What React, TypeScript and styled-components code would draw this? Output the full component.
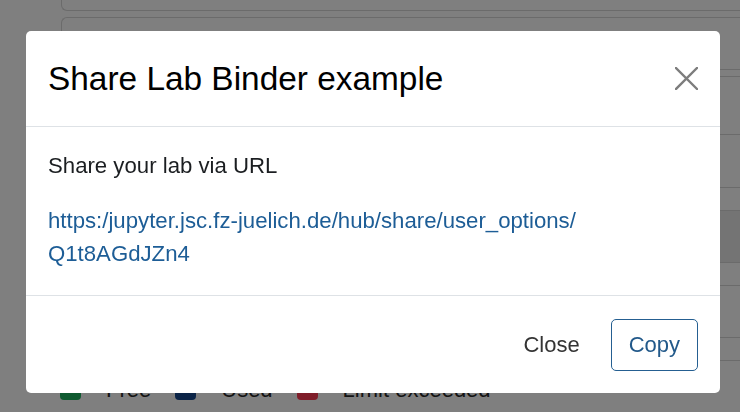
import React from "react";
import styled, { createGlobalStyle } from "styled-components";

const GlobalStyle = createGlobalStyle`
  html, body {
    margin: 0;
    padding: 0;
    background: #7f7f7f;
    font-family: "Liberation Sans", Arial, sans-serif;
    overflow: hidden;
  }
  * { box-sizing: border-box; }
`;

const Page = styled.div`
  width: 740px;
  height: 412px;
  padding-left: 61px;
  display: flex;
  flex-direction: column;
`;

const TopCard = styled.div`
  height: 11px;
  border: 1px solid #6b6b6b;
  border-top: none;
  border-right: none;
  border-radius: 0 0 0 6px;
`;

const Card = styled.div`
  margin-top: 6px;
  border: 1px solid #6b6b6b;
  border-right: none;
  border-radius: 6px 0 0 6px;
  display: flex;
  flex-direction: column;
  padding-bottom: 22px;
`;

const Row = styled.div<{ $h: number; $shade?: boolean }>`
  height: ${(p) => p.$h + 1}px;
  border-bottom: 1px solid #6b6b6b;
  background: ${(p) => (p.$shade ? "#747474" : "transparent")};
`;

const Legend = styled.div`
  margin-top: 12px;
  margin-left: -1px;
  display: flex;
  align-items: center;
  font-size: 22px;
  line-height: 33px;
  color: #141414;
`;

const Swatch = styled.span<{ $c: string }>`
  width: 21px;
  height: 21px;
  border-radius: 4px;
  background: ${(p) => p.$c};
  margin-right: 25px;
`;

const LegendLabel = styled.span`
  margin-right: 24px;
`;

const Dialog = styled.div`
  position: fixed;
  top: 31px;
  left: 26px;
  width: 694px;
  height: 362px;
  background: #fff;
  border-radius: 5px;
  display: flex;
  flex-direction: column;
  color: #1b1e21;
`;

const Header = styled.div`
  height: 96px;
  padding: 0 22px;
  border-bottom: 1px solid #dee2e6;
  display: flex;
  align-items: center;
  justify-content: space-between;
`;

const Title = styled.h4`
  margin: 0;
  font-size: 33.4px;
  line-height: 49px;
  font-weight: 400;
  color: #000;
`;

const CloseX = styled.button`
  width: 23px;
  height: 23px;
  padding: 0;
  border: none;
  background: transparent;
  display: flex;
  cursor: pointer;
  color: #7d7d7d;
`;

const Body = styled.div`
  padding: 22px 22px 25px;
  border-bottom: 1px solid #dee2e6;
  font-size: 22.2px;
  line-height: 33px;
`;

const Para = styled.p`
  margin: 0 0 22px;
  &:last-child { margin-bottom: 0; }
`;

const Link = styled.a`
  color: #1d5d96;
  text-decoration: none;
`;

const Footer = styled.div`
  flex: 1;
  padding: 0 22px 0 22px;
  display: flex;
  align-items: center;
  justify-content: flex-end;
  gap: 13px;
`;

const Button = styled.button<{ $outline?: boolean }>`
  font-family: inherit;
  font-size: 22px;
  line-height: 33px;
  padding: 8.5px 17px;
  border-radius: 5px;
  background: #fff;
  cursor: pointer;
  border: 1px solid ${(p) => (p.$outline ? "#255f91" : "transparent")};
  color: ${(p) => (p.$outline ? "#22598a" : "#343434")};
`;

const rows = [
  { h: 51 },
  { h: 6 },
  { h: 57 },
  { h: 52 },
  { h: 22 },
  { h: 51, shade: true },
  { h: 22 },
  { h: 51 },
];

const legend = [
  { c: "#0f5a30", label: "Free" },
  { c: "#0b2447", label: "Used" },
  { c: "#7f1d29", label: "Limit exceeded" },
];

export default function App() {
  return (
    <>
      <GlobalStyle />
      <Page>
        <TopCard />
        <Card>
          {rows.map((r, i) => (
            <Row key={i} $h={r.h} $shade={r.shade} />
          ))}
        </Card>
        <Legend>
          {legend.map((l) => (
            <React.Fragment key={l.label}>
              <Swatch $c={l.c} />
              <LegendLabel>{l.label}</LegendLabel>
            </React.Fragment>
          ))}
        </Legend>
      </Page>
      <Dialog role="dialog">
        <Header>
          <Title>Share Lab Binder example</Title>
          <CloseX aria-label="Close">
            <svg width="23" height="23" viewBox="0 0 23 23">
              <path d="M1 1 L22 22 M22 1 L1 22" stroke="currentColor" strokeWidth="2.4" strokeLinecap="square" fill="none" />
            </svg>
          </CloseX>
        </Header>
        <Body>
          <Para>Share your lab via URL</Para>
          <Para>
            <Link href="#">https:/jupyter.jsc.fz-juelich.de/hub/share/user_options/<br />Q1t8AGdJZn4</Link>
          </Para>
        </Body>
        <Footer>
          <Button>Close</Button>
          <Button $outline>Copy</Button>
        </Footer>
      </Dialog>
    </>
  );
}
